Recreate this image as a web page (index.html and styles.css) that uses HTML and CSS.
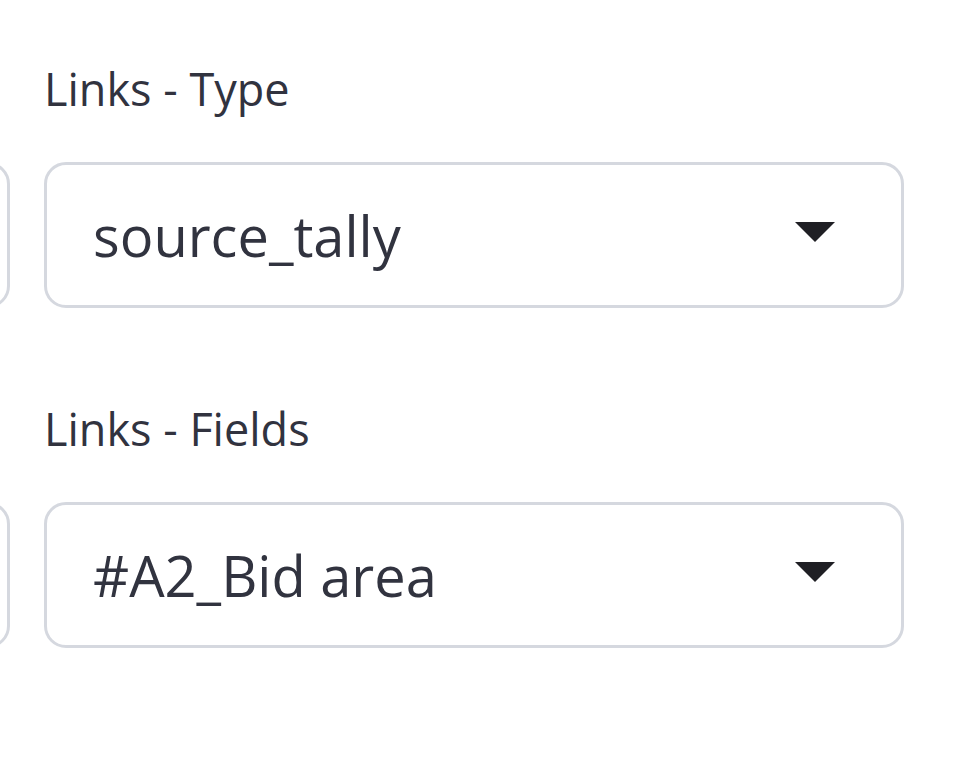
FILE: index.html
```html
<!DOCTYPE html>
<html>
<head>
<meta charset="utf-8">
<link rel="stylesheet" href="styles.css">
</head>
<body>
<div class="form">
  <div class="row">
    <div class="field">
      <div class="label"></div>
      <div class="select"><span class="value"></span><span class="caret"></span></div>
    </div>
    <div class="field">
      <div class="label">Links - Type</div>
      <div class="select"><span class="value">source_tally</span><span class="caret"></span></div>
    </div>
  </div>
  <div class="row">
    <div class="field">
      <div class="label"></div>
      <div class="select"><span class="value"></span><span class="caret"></span></div>
    </div>
    <div class="field">
      <div class="label">Links - Fields</div>
      <div class="select"><span class="value">#A2_Bid area</span><span class="caret"></span></div>
    </div>
  </div>
</div>
</body>
</html>
```
FILE: styles.css
```css
html, body {
  margin: 0;
  padding: 0;
  background: #ffffff;
}
body {
  font-family: "Open Sans", "Noto Sans", sans-serif;
  color: #31333f;
  overflow: hidden;
}
.form {
  display: flex;
  flex-direction: column;
  gap: 91px;
  padding-top: 59px;
  margin-left: -850px;
}
.row {
  display: grid;
  grid-template-columns: 860px 860px;
  column-gap: 34px;
}
.field {
  display: flex;
  flex-direction: column;
}
.label {
  font-size: 45px;
  line-height: 60px;
  height: 60px;
  margin-bottom: 43px;
  white-space: nowrap;
}
.select {
  box-sizing: border-box;
  height: 146px;
  border: 3px solid #d5d8df;
  border-radius: 22px;
  display: flex;
  align-items: center;
  justify-content: space-between;
  padding: 0 66px 0 46px;
}
.value {
  font-size: 56px;
  line-height: 1;
  white-space: nowrap;
}
.caret {
  width: 0;
  height: 0;
  border-left: 20px solid transparent;
  border-right: 20px solid transparent;
  border-top: 20px solid #1f1f24;
  margin-top: -6px;
}
```
